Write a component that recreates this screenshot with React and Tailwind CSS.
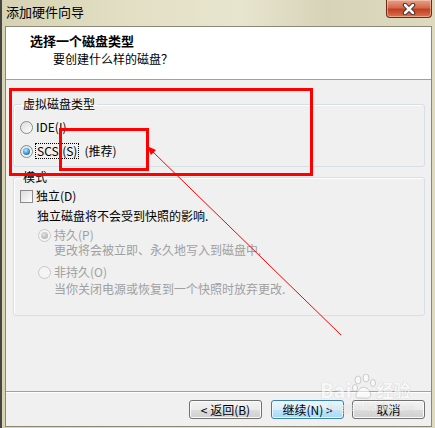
import React from "react";

const cjk = "font-['Noto_Sans_CJK_SC','Noto_Sans',sans-serif]";

function Radio({ checked, disabled }) {
    return (
        <span
            className={`flex items-center justify-center w-[13px] h-[13px] rounded-full border shrink-0 ${
                disabled
                    ? "border-[#c8c8c8] bg-[#f4f4f4]"
                    : "border-[#8a8a8a] bg-[linear-gradient(135deg,#dcdcdc,#ffffff)]"
            }`}
        >
            {checked && (
                <span
                    className={`w-[7px] h-[7px] rounded-full ${
                        disabled
                            ? "bg-[radial-gradient(circle_at_40%_35%,#e0e0e0,#a8a8a8)]"
                            : "bg-[radial-gradient(circle_at_40%_35%,#bfeaff,#2a8ad0_60%,#0d4f86)]"
                    }`}
                />
            )}
        </span>
    );
}

function WinButton({ children, primary }) {
    return (
        <button
            className={`h-[19px] w-[73px] rounded-[3px] border text-[12px] leading-none text-black flex items-center justify-center ${
                primary
                    ? "border-[#3c7fb1] bg-[linear-gradient(#eaf6fd,#d9f0fc_50%,#bee6fd_50%,#a7d9f5)] shadow-[inset_0_0_0_1px_#e8f6ff]"
                    : "border-[#707070] bg-[linear-gradient(#f2f2f2,#ebebeb_50%,#dddddd_50%,#cfcfcf)] shadow-[inset_0_0_0_1px_#fbfbfb]"
            }`}
        >
            {children}
        </button>
    );
}

export default function App() {
    return (
        <div className={`relative w-[435px] h-[428px] overflow-hidden flex flex-col border-l-2 border-[#454545] bg-[linear-gradient(90deg,#d6d2b2,#e3dfc5_30%,#e8e5cf_55%,#d7d3b8_75%,#dedac0)] ${cjk}`}>
            {/* Title bar */}
            <div className="h-[26px] shrink-0 flex items-start pl-[4px] pt-[3px]">
                <span className="text-[13px] leading-[17px] text-black">添加硬件向导</span>
            </div>

            {/* Close button */}
            <div className="absolute top-0 right-[3px] w-[46px] h-[18px] rounded-b-[4px] border border-t-0 border-[#6b2a1c] bg-[linear-gradient(#e8a08c,#d46a4d_45%,#c2401f_55%,#d8734f)] flex items-center justify-center shadow-[inset_0_0_0_1px_rgba(255,220,200,0.5)]">
                <svg width="14" height="12" viewBox="0 0 14 12">
                    <path d="M3 2 L11 10 M11 2 L3 10" stroke="#3b2a26" strokeWidth="4.5" strokeLinecap="round" />
                    <path d="M3 2 L11 10 M11 2 L3 10" stroke="#ffffff" strokeWidth="2.5" strokeLinecap="round" />
                </svg>
            </div>

            {/* Window content */}
            <div className="flex-1 ml-[3px] mr-[3px] mb-[1px] border border-[#8b8878] bg-[#f0f0f0] flex flex-col">
                {/* Header */}
                <div className="h-[53px] shrink-0 bg-white border-b border-[#a0a0a0] pl-[24px] pt-[6px]">
                    <div className="text-[13px] leading-[16px] font-bold text-black">选择一个磁盘类型</div>
                    <div className="mt-[2px] pl-[23px] text-[12px] leading-[16px] text-black">要创建什么样的磁盘？</div>
                </div>

                {/* Body */}
                <div className="flex-1 pr-[6px] pl-[7px] text-[12px] text-black">
                    <fieldset className="mt-[17px] border border-[#d5dfe5] rounded-[3px] shadow-[inset_1px_1px_0_#ffffff] pl-[6px] pb-[7px]">
                        <legend className="ml-[1px] px-[2px] leading-[14px]">虚拟磁盘类型</legend>
                        <div className="mt-[8px] h-[16px] flex items-center gap-[3px]">
                            <Radio />
                            <span className="leading-[14px]">IDE(I)</span>
                        </div>
                        <div className="mt-[8px] h-[16px] flex items-center gap-[2px]">
                            <Radio checked />
                            <span className="leading-[14px] border border-dotted border-black px-[1px]">SCSI(S)</span>
                            <span className="leading-[14px] ml-[3px]">(推荐)</span>
                        </div>
                    </fieldset>

                    <fieldset className="mt-[3px] border border-[#d5dfe5] rounded-[3px] shadow-[inset_1px_1px_0_#ffffff] pl-[6px] pb-[19px]">
                        <legend className="ml-[1px] px-[2px] leading-[14px]">模式</legend>
                        <div className="mt-[4px] h-[16px] flex items-center gap-[3px]">
                            <span className="w-[13px] h-[13px] border border-[#8a8a8a] bg-[linear-gradient(135deg,#dcdcdc,#ffffff)] shrink-0" />
                            <span className="leading-[14px]">独立(D)</span>
                        </div>
                        <div className="mt-[4px] h-[16px] pl-[17px] leading-[16px]">独立磁盘将不会受到快照的影响.</div>
                        <div className="mt-[3px] h-[16px] pl-[18px] flex items-center gap-[3px] text-[#a0a0a0]">
                            <Radio checked disabled />
                            <span className="leading-[14px]">持久(P)</span>
                        </div>
                        <div className="h-[14px] pl-[34px] leading-[14px] text-[#a0a0a0]">更改将会被立即、永久地写入到磁盘中.</div>
                        <div className="mt-[7px] h-[16px] pl-[18px] flex items-center gap-[3px] text-[#a0a0a0]">
                            <Radio disabled />
                            <span className="leading-[14px]">非持久(O)</span>
                        </div>
                        <div className="mt-[2px] h-[14px] pl-[34px] leading-[14px] text-[#a0a0a0]">当你关闭电源或恢复到一个快照时放弃更改.</div>
                    </fieldset>
                </div>

                {/* Footer */}
                <div className="shrink-0 border-t border-[#a0a0a0]">
                    <div className="border-t border-white pt-[7px] pb-[7px] pr-[6px] flex justify-end">
                        <WinButton>&lt; 返回(B)</WinButton>
                        <div className="ml-[9px]">
                            <WinButton primary>继续(N) &gt;</WinButton>
                        </div>
                        <div className="ml-[8px]">
                            <WinButton>取消</WinButton>
                        </div>
                    </div>
                </div>
            </div>

            {/* Baidu watermark */}
            <div className="absolute left-[318px] top-[374px] pointer-events-none select-none opacity-60">
                <div className="flex items-end">
                    <span className="text-[20px] leading-[22px] font-bold text-white [text-shadow:0_0_1px_#9a9a9a]">Bai</span>
                    <svg width="24" height="26" viewBox="0 0 24 26" className="mb-[1px]">
                        <g fill="#ffffff" stroke="#a0a0a0" strokeWidth="0.8">
                            <ellipse cx="6" cy="6" rx="3" ry="4" />
                            <ellipse cx="14" cy="4" rx="3" ry="4" />
                            <ellipse cx="21" cy="9" rx="2.5" ry="3.5" />
                            <ellipse cx="3" cy="14" rx="2.5" ry="3.5" />
                            <path d="M6 24 C2 24 4 17 9 14 C12 12 16 14 18 18 C21 23 16 25 12 24 Z" />
                        </g>
                    </svg>
                    <span className="text-[17px] leading-[22px] font-bold text-white [text-shadow:0_0_1px_#9a9a9a] ml-[1px]">经验</span>
                </div>
                <div className="ml-[8px] text-[10px] leading-[11px] text-white [text-shadow:0_0_1px_#9a9a9a]">jingyan.baidu.com</div>
            </div>

            {/* Red annotation boxes */}
            <div className="absolute left-[7px] top-[88px] w-[304px] h-[88px] border-[3px] border-[#ff0000] pointer-events-none" />
            <div className="absolute left-[57px] top-[128px] w-[90px] h-[43px] border-[3px] border-[#ff0000] pointer-events-none" />

            {/* Red arrow */}
            <svg className="absolute left-0 top-0 pointer-events-none" width="435" height="428" viewBox="0 0 435 428">
                <line x1="339" y1="335" x2="150" y2="151" stroke="#ff0000" strokeWidth="1" />
                <polygon points="145,146 154,150 149,155" fill="#ff0000" />
            </svg>
        </div>
    );
}
